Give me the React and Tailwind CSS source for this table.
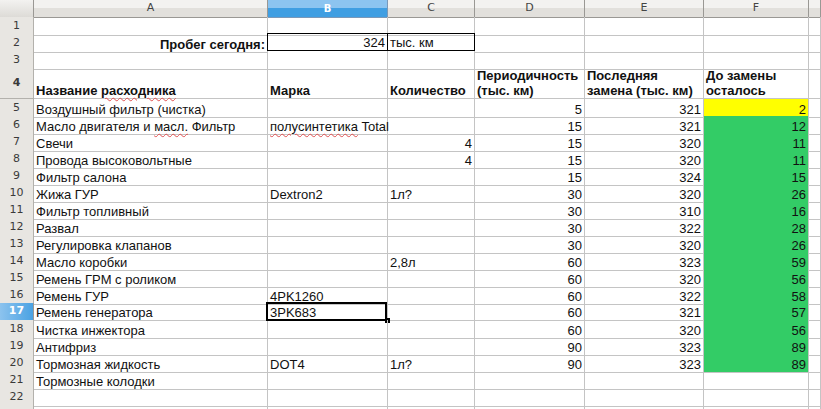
import React from 'react';

const cols = ['A', 'B', 'C', 'D', 'E', 'F', ''];

const items = [
  { n: 5, a: 'Воздушный фильтр (чистка)', d: 5, e: 321, f: 2, fill: 'yellow' },
  { n: 6, a: 'Масло двигателя и масл. Фильтр', b: 'полусинтетика Total', d: 15, e: 321, f: 12, fill: 'green' },
  { n: 7, a: 'Свечи', c: 4, d: 15, e: 320, f: 11, fill: 'green' },
  { n: 8, a: 'Провода высоковольтные', c: 4, d: 15, e: 320, f: 11, fill: 'green' },
  { n: 9, a: 'Фильтр салона', d: 15, e: 324, f: 15, fill: 'green' },
  { n: 10, a: 'Жижа ГУР', b: 'Dextron2', c: '1л?', d: 30, e: 320, f: 26, fill: 'green' },
  { n: 11, a: 'Фильтр топливный', d: 30, e: 310, f: 16, fill: 'green' },
  { n: 12, a: 'Развал', d: 30, e: 322, f: 28, fill: 'green' },
  { n: 13, a: 'Регулировка клапанов', d: 30, e: 320, f: 26, fill: 'green' },
  { n: 14, a: 'Масло коробки', c: '2,8л', d: 60, e: 323, f: 59, fill: 'green' },
  { n: 15, a: 'Ремень ГРМ с роликом', d: 60, e: 320, f: 56, fill: 'green' },
  { n: 16, a: 'Ремень ГУР', b: '4PK1260', d: 60, e: 322, f: 58, fill: 'green' },
  { n: 17, a: 'Ремень генератора', b: '3PK683', d: 60, e: 321, f: 57, fill: 'green', sel: true },
  { n: 18, a: 'Чистка инжектора', d: 60, e: 320, f: 56, fill: 'green' },
  { n: 19, a: 'Антифриз', d: 90, e: 323, f: 89, fill: 'green' },
  { n: 20, a: 'Тормозная жидкость', b: 'DOT4', c: '1л?', d: 90, e: 323, f: 89, fill: 'green' },
  { n: 21, a: 'Тормозные колодки' },
  { n: 22 },
  { n: '' },
];

const grid = 'grid grid-cols-[34px_234px_120px_87px_110px_119px_105px_1fr]';
const cell = 'border-r border-b border-[#c4c4c4] px-[2px] flex items-end leading-[15px] whitespace-nowrap overflow-visible';

function RowHead({ n, active }) {
  if (active) {
    return (
      <div className="border-r border-b border-[#9a9894] bg-[linear-gradient(90deg,#8cc3ee,#4aa2e3)] flex items-center justify-center text-[11px] font-bold text-white font-['DejaVu_Sans',sans-serif]">
        {n}
      </div>
    );
  }
  return (
    <div className="border-r border-b border-[#b3b1ac] bg-[#e8e6e2] flex items-center justify-center pt-px text-[11px] text-[#3a3a3a] font-['DejaVu_Sans',sans-serif]">
      {n}
    </div>
  );
}

function Wavy({ children }) {
  return <span className="underline decoration-wavy decoration-[#e05050] decoration-1 underline-offset-2">{children}</span>;
}

export default function App() {
  return (
    <div className="w-[821px] h-[409px] overflow-hidden bg-white text-[13px] text-[#111] font-['Liberation_Sans',Arial,sans-serif]">
      {/* column header */}
      <div className={`${grid} h-[17px]`}>
        <div className="border-r border-b border-[#9a9894] bg-[linear-gradient(#f3f2f0,#dddbd7)]" />
        {cols.map((c) => (
          <div
            key={c || 'x'}
            className={
              c === 'B'
                ? "border-r border-b border-[#7a98b8] bg-[linear-gradient(#8cc4f0_50%,#3f9ee2_50%)] flex items-center justify-center text-[10px] font-bold text-white font-['DejaVu_Sans',sans-serif]"
                : "border-r border-b border-[#9a9894] bg-[linear-gradient(#f3f2f0_50%,#e2e0dc_50%)] flex items-center justify-center text-[11px] text-[#444] font-['DejaVu_Sans',sans-serif]"
            }
          >
            {c}
          </div>
        ))}
      </div>

      {/* row 1 */}
      <div className={`${grid} h-[17px]`}>
        <RowHead n={1} />
        {cols.map((c, i) => <div key={i} className={cell} />)}
      </div>

      {/* row 2 */}
      <div className={`${grid} h-[17px]`}>
        <RowHead n={2} />
        <div className={`${cell} justify-end font-bold`}>Пробег сегодня:</div>
        <div className="border border-black -ml-px -mt-px h-[18px] px-[2px] flex items-end justify-end leading-[15px]">324</div>
        <div className="border border-black border-l-0 -mt-px h-[18px] px-[2px] flex items-end leading-[15px]">тыс. км</div>
        <div className={cell} />
        <div className={cell} />
        <div className={cell} />
        <div className={cell} />
      </div>

      {/* row 3 */}
      <div className={`${grid} h-[17px]`}>
        <RowHead n={3} />
        {cols.map((c, i) => <div key={i} className={cell} />)}
      </div>

      {/* row 4 */}
      <div className={`${grid} h-[31px] font-bold`}>
        <RowHead n={4} />
        <div className={cell}><span>Название <Wavy>расходника</Wavy></span></div>
        <div className={cell}>Марка</div>
        <div className={cell}>Количество</div>
        <div className={`${cell} flex-col !items-start justify-end`}>
          <span>Периодичность</span>
          <span>(тыс. км)</span>
        </div>
        <div className={`${cell} flex-col !items-start justify-end`}>
          <span>Последняя</span>
          <span>замена (тыс. км)</span>
        </div>
        <div className={`${cell} flex-col !items-start justify-end`}>
          <span>До замены</span>
          <span>осталось</span>
        </div>
        <div className={cell} />
      </div>

      {items.map((r, idx) => {
        const num = typeof r.c === 'number';
        const fillCls =
          r.fill === 'yellow'
            ? 'bg-[#ffff00] border-b-[#ffff00] border-r-[#c4c4c4]'
            : r.fill === 'green'
            ? 'bg-[#33cc66] border-b-[#33cc66]'
            : '';
        return (
          <div key={idx} className={`${grid} h-[17px]`}>
            <RowHead n={r.n} active={r.sel} />
            <div className={cell}>
              {r.n === 6 ? <span>Масло двигателя и <Wavy>масл.</Wavy> Фильтр</span> : r.a}
            </div>
            <div className={`${cell} relative`}>
              {r.n === 6 ? <Wavy>полусинтетика</Wavy> : null}
              {r.n === 6 ? <span>&nbsp;Total</span> : r.b}
              {r.sel && (
                <>
                  <div className="absolute -left-[2px] -top-px w-[121px] h-[19px] border-2 border-black" />
                  <div className="absolute -right-[3px] -bottom-[3px] w-[5px] h-[5px] bg-black" />
                </>
              )}
            </div>
            <div className={`${cell} ${num ? 'justify-end' : ''}`}>{r.c}</div>
            <div className={`${cell} justify-end`}>{r.d}</div>
            <div className={`${cell} justify-end`}>{r.e}</div>
            <div className={`${cell} justify-end ${fillCls} ${r.n === 20 ? '!border-b-[#c4c4c4]' : ''}`}>{r.f}</div>
            <div className={cell} />
          </div>
        );
      })}
    </div>
  );
}
